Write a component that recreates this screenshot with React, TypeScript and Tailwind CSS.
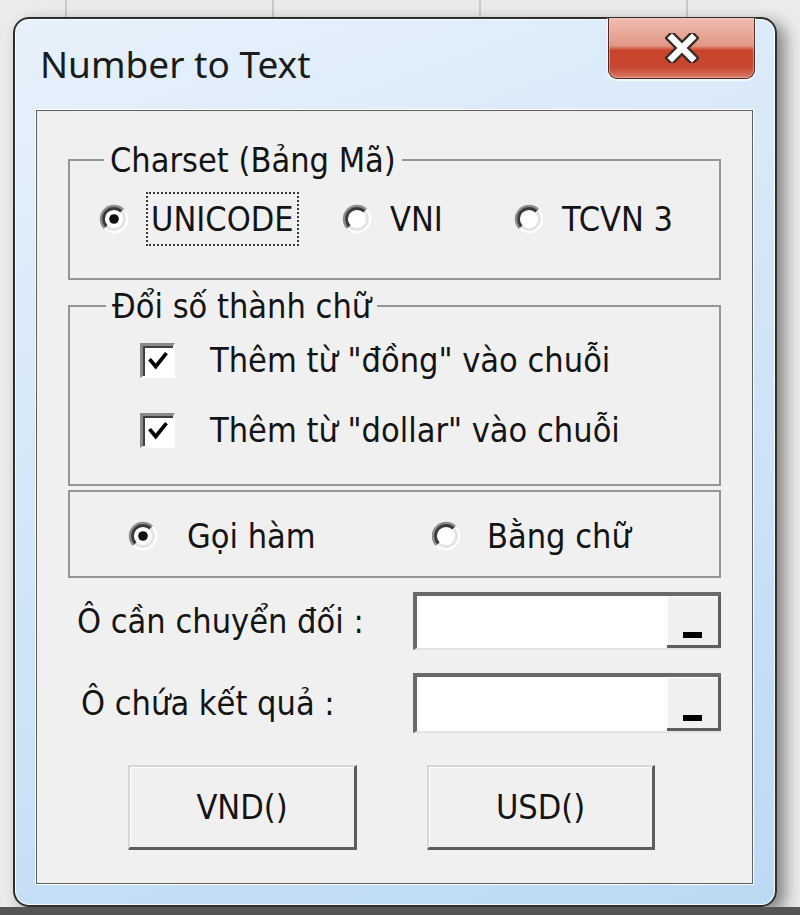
import React from "react";

const ui = "font-['DejaVu_Sans_Condensed','DejaVu_Sans',sans-serif] font-stretch-condensed text-[34px] text-[#141414]";

const Radio = ({ checked = false }: { checked?: boolean }) => (
  <svg width="30" height="30" viewBox="0 0 30 30" className="shrink-0">
    <circle cx="15" cy="15" r="12" fill="#fff" />
    <path d="M5.808 24.192 A13 13 0 0 1 24.192 5.808" fill="none" stroke="#8c8c8c" strokeWidth="2.6" />
    <path d="M24.192 5.808 A13 13 0 0 1 5.808 24.192" fill="none" stroke="#ffffff" strokeWidth="2.6" />
    <path d="M7.575 22.425 A10.5 10.5 0 0 1 22.425 7.575" fill="none" stroke="#3a3a3a" strokeWidth="2.8" />
    <path d="M22.425 7.575 A10.5 10.5 0 0 1 7.575 22.425" fill="none" stroke="#e4e4e4" strokeWidth="2.8" />
    {checked && <circle cx="15" cy="15" r="4.8" fill="#111" />}
  </svg>
);

const CheckBox = () => (
  <div className="w-[35px] h-[35px] shrink-0 bg-white border-t-[3px] border-l-[3px] border-b-2 border-r-2 border-[#8a8a8a] border-b-white border-r-white shadow-[inset_2px_2px_0_#3f3f3f] flex items-center justify-center">
    <svg width="22" height="22" viewBox="0 0 24 24">
      <path d="M4 11.5 L9.5 18 L20 5" fill="none" stroke="#000" strokeWidth="4" strokeLinecap="square" />
    </svg>
  </div>
);

const TextBox = ({ h }: { h: string }) => (
  <div className={`w-[308px] ${h} flex bg-white border-t-[4px] border-l-[4px] border-b-2 border-[#6a6a6a] border-b-[#e4e4e4]`}>
    <div className="flex-1" />
    <div className="w-[54px] bg-[#f0f0f0] border-r-[3px] border-b-[3px] border-[#5e5e5e] shadow-[inset_1px_1px_0_#fff] flex items-end justify-center pb-[7px]">
      <div className="w-[19px] h-[6px] bg-black" />
    </div>
  </div>
);

const Button = ({ label, w }: { label: string; w: string }) => (
  <div className={`${w} h-[85px] flex items-center justify-center bg-[#f0f0f0] border-t-2 border-l-2 border-[#d6d6d6] border-b-[3px] border-r-[3px] border-b-[#5c5c5c] border-r-[#5c5c5c] shadow-[inset_1px_1px_0_#fff]`}>
    <span>{label}</span>
  </div>
);

const CloseButton = () => (
  <div className="ml-auto self-start mt-[-1px] mr-[20px] w-[147px] h-[61px] rounded-b-[9px] border border-t-0 border-[#4e2620] bg-[linear-gradient(to_bottom,#efbcb0_0%,#e29887_46%,#c9432b_54%,#c84630_82%,#d97a66_100%)] shadow-[0_1px_0_1px_rgba(255,255,255,0.7),inset_0_0_0_1px_rgba(255,200,190,0.5)] flex items-center justify-center">
    <svg width="34" height="30" viewBox="0 0 34 30">
      <path d="M7 5 L27 25 M27 5 L7 25" stroke="#3a2a28" strokeWidth="11" strokeLinecap="square" />
      <path d="M7 5 L27 25 M27 5 L7 25" stroke="#ffffff" strokeWidth="6.5" strokeLinecap="square" />
    </svg>
  </div>
);

export default function App() {
  return (
    <div className="w-[800px] h-[915px] overflow-hidden flex flex-col bg-[#ebebeb] bg-[repeating-linear-gradient(90deg,transparent_0px,transparent_65px,#c9c9c9_65px,#c9c9c9_67px,transparent_67px,transparent_207px)]">
      <div className="ml-[13px] mt-[17px] w-[764px] h-[890px] shrink-0 rounded-[16px] border-2 border-[#2e2e2e] bg-[linear-gradient(160deg,#e7f1fb_0%,#d5e7f8_40%,#bcd9f4_100%)] shadow-[inset_0_0_0_1px_rgba(255,255,255,0.85),8px_6px_16px_rgba(0,0,0,0.45)] flex flex-col">
        <div className="h-[91px] shrink-0 flex items-center pl-[25px]">
          <span className="font-['Noto_Sans',sans-serif] text-[37px] text-[#1b1b1b] pb-[2px]">Number to Text</span>
          <CloseButton />
        </div>

        <div className={`ml-[21px] mr-[22px] mb-[21px] flex-1 border border-[#5f5f5f] bg-[#f0f0f0] shadow-[0_0_0_1px_#fff] flex flex-col px-[31px] ${ui}`}>
          <fieldset className="mt-[29px] h-[140px] border-2 border-[#959595]">
            <legend className="ml-[34px] px-[6px] leading-[40px]">Charset (Bảng Mã)</legend>
            <div className="mt-[12px] h-[54px] flex items-center pl-[29px]">
              <div className="w-[243px] flex items-center gap-[17px]">
                <Radio checked />
                <span className="h-[54px] px-[3px] flex items-center border-2 border-dotted border-[#3a3a3a]">UNICODE</span>
              </div>
              <div className="w-[172px] flex items-center gap-[18px]">
                <Radio />
                <span>VNI</span>
              </div>
              <div className="flex items-center gap-[18px]">
                <Radio />
                <span>TCVN 3</span>
              </div>
            </div>
          </fieldset>

          <fieldset className="mt-[6px] h-[200px] border-2 border-[#959595]">
            <legend className="ml-[36px] px-[6px] leading-[40px]">Đổi số thành chữ</legend>
            <div className="mt-[14px] pl-[70px] flex flex-col gap-[30px]">
              <div className="h-[40px] flex items-center gap-[35px]">
                <CheckBox />
                <span>Thêm từ "đồng" vào chuỗi</span>
              </div>
              <div className="h-[40px] flex items-center gap-[35px]">
                <CheckBox />
                <span>Thêm từ "dollar" vào chuỗi</span>
              </div>
            </div>
          </fieldset>

          <div className="mt-[4px] h-[88px] border-2 border-[#959595] flex items-center pl-[58px] pt-[4px]">
            <div className="w-[303px] flex items-center gap-[29px]">
              <Radio checked />
              <span>Gọi hàm</span>
            </div>
            <div className="flex items-center gap-[26px]">
              <Radio />
              <span>Bằng chữ</span>
            </div>
          </div>

          <div className="mt-[14px] flex items-center">
            <span className="ml-[9px] w-[337px]">Ô cần chuyển đối :</span>
            <TextBox h="h-[58px]" />
          </div>
          <div className="mt-[23px] flex items-center">
            <span className="ml-[13px] w-[333px]">Ô chứa kết quả :</span>
            <TextBox h="h-[60px]" />
          </div>

          <div className="mt-[32px] flex">
            <div className="ml-[60px]">
              <Button label="VND()" w="w-[229px]" />
            </div>
            <div className="ml-[70px]">
              <Button label="USD()" w="w-[228px]" />
            </div>
          </div>
        </div>
      </div>
      <div className="flex-1 bg-[#555]" />
    </div>
  );
}
